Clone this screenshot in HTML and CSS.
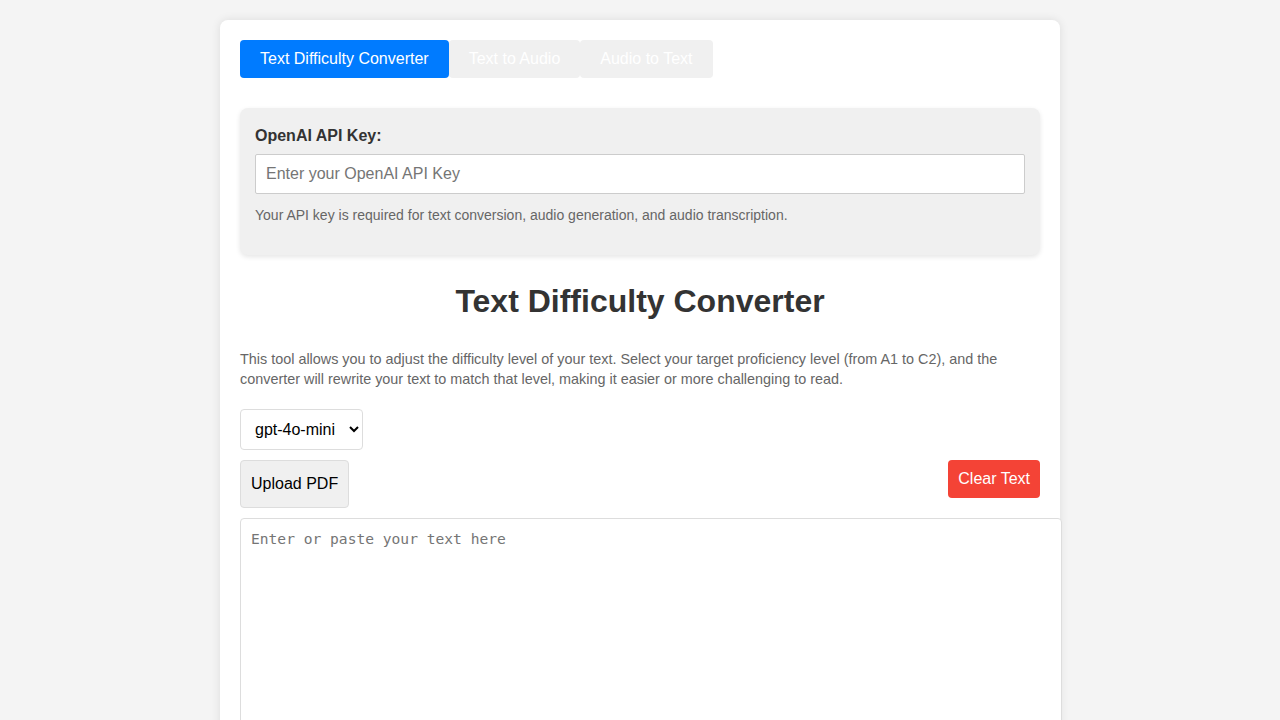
FILE: index.html
```html
<!DOCTYPE html>
<html lang="en">
<head>
<meta charset="utf-8">
<title>Text Difficulty Converter</title>
<link rel="stylesheet" href="styles.css">
</head>
<body>
<div class="container">
  <div class="tabs">
    <button class="tab active">Text Difficulty Converter</button>
    <button class="tab">Text to Audio</button>
    <button class="tab">Audio to Text</button>
  </div>

  <div class="api-box">
    <label class="api-label" for="api-key">OpenAI API Key:</label>
    <input id="api-key" class="api-input" type="password" placeholder="Enter your OpenAI API Key">
    <p class="api-help">Your API key is required for text conversion, audio generation, and audio transcription.</p>
  </div>

  <h2 class="title">Text Difficulty Converter</h2>
  <p class="intro">This tool allows you to adjust the difficulty level of your text. Select your target proficiency level (from A1 to C2), and the converter will rewrite your text to match that level, making it easier or more challenging to read.</p>

  <select class="model-select">
    <option>gpt-4o-mini</option>
    <option>gpt-4o</option>
  </select>

  <div class="actions">
    <button class="upload-btn">Upload PDF</button>
    <button class="clear-btn">Clear Text</button>
  </div>

  <textarea class="text-input" placeholder="Enter or paste your text here"></textarea>
</div>
</body>
</html>
```
FILE: styles.css
```css
body {
  margin: 0;
  background: #f4f4f4;
  font-family: "Liberation Sans", Arial, sans-serif;
  color: #333;
}

.container {
  max-width: 800px;
  margin: 20px auto;
  padding: 20px;
  background: #fff;
  border-radius: 8px;
  box-shadow: 0 0 10px rgba(0, 0, 0, 0.1);
}

.tabs {
  display: flex;
  margin-bottom: 30px;
}

.tab {
  font-family: inherit;
  font-size: 16px;
  line-height: 18px;
  padding: 10px 20px;
  border: none;
  border-radius: 4px;
  background: #f0f0f0;
  color: #fff;
  cursor: pointer;
}

.tab.active {
  background: #007bff;
}

.api-box {
  background: #f0f0f0;
  border-radius: 8px;
  padding: 19px 15px 15px;
  box-shadow: 0 2px 5px rgba(0, 0, 0, 0.1);
}

.api-label {
  display: block;
  font-weight: bold;
  font-size: 16px;
  line-height: 18px;
  margin-bottom: 9px;
}

.api-input {
  display: block;
  width: 100%;
  box-sizing: border-box;
  height: 40px;
  padding: 10px;
  font-family: inherit;
  font-size: 16px;
  border: 1px solid #ccc;
  border-radius: 2px;
  background: #fff;
}

.api-input::placeholder {
  color: #757575;
}

.api-help {
  margin: 13px 0 16px;
  font-size: 14px;
  line-height: 17px;
  color: #666;
}

.title {
  text-align: center;
  font-size: 32px;
  line-height: 37px;
  margin: 28px 0 29px;
  color: #333;
}

.intro {
  margin: 0 0 20px;
  font-size: 0.9em;
  line-height: 20px;
  color: #666;
}

.model-select {
  display: block;
  width: 123px;
  height: 41px;
  padding: 0 8px 0 10px;
  font-family: inherit;
  font-size: 16px;
  color: #000;
  background: #fff;
  border: 1px solid #ddd;
  border-radius: 4px;
  margin-bottom: 10px;
}

.actions {
  display: flex;
  justify-content: space-between;
  align-items: flex-start;
  margin-bottom: 10px;
}

.upload-btn {
  font-family: inherit;
  font-size: 16px;
  line-height: 18px;
  height: 48px;
  padding: 0 10px;
  color: #000;
  background: #f0f0f0;
  border: 1px solid #ddd;
  border-radius: 4px;
}

.clear-btn {
  font-family: inherit;
  font-size: 16px;
  line-height: 18px;
  padding: 10px;
  color: #fff;
  background: #f44336;
  border: none;
  border-radius: 4px;
}

.text-input {
  display: block;
  width: 100%;
  height: 300px;
  padding: 11px 10px 10px;
  font-family: "DejaVu Sans Mono", monospace;
  font-size: 14.6px;
  line-height: 18px;
  border: 1px solid #ddd;
  border-radius: 4px;
  resize: vertical;
}
```
